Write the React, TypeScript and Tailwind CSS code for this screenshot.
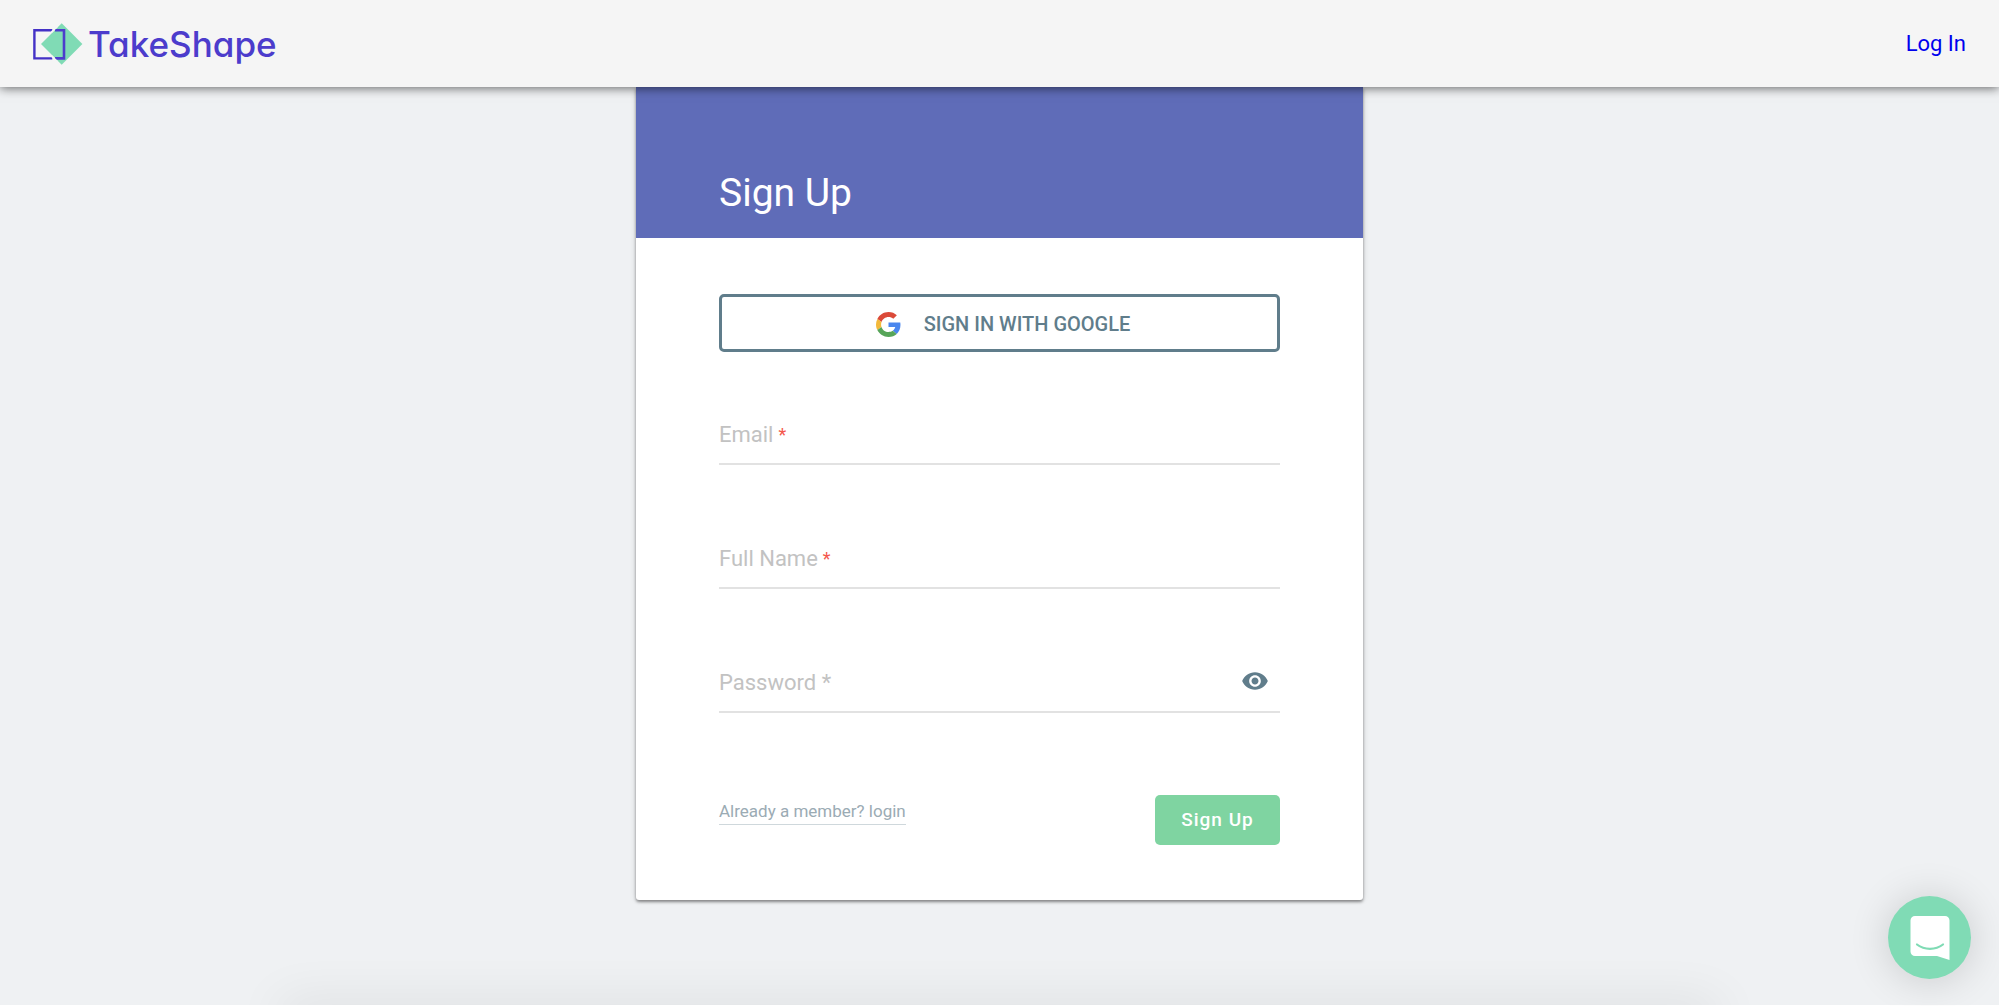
import { useState } from 'react';
import type { ReactNode } from 'react';

function Logo() {
  return (
    <a href="/" className="flex items-center gap-[5px] text-[#4c3ccc]">
      <svg viewBox="0 0 50 42" className="h-[42px] w-[50px]" aria-hidden="true">
        <path d="M19.300 7.200H1.400v28.200h17.900" fill="none" stroke="#4431c6" strokeWidth="2.400" />
        <path d="M28.700 0.300 49.400 21 28.700 41.700 8 21Z" fill="#80dbb5" />
        <path d="M22 7.200H31v28.200h-9" fill="none" stroke="#4c3ccc" strokeWidth="2.600" />
        <path d="M24.500 3.200 18.500 9.200M24.500 38.800 18.500 32.800" fill="none" stroke="#f5f5f5" strokeWidth="1.800" />
      </svg>
      <span className="font-['Inter',sans-serif] text-[35px] leading-[44px] font-medium [font-feature-settings:'cv11']">
        TakeShape
      </span>
    </a>
  );
}

function GoogleIcon() {
  return (
    <svg viewBox="0 0 48 48" className="size-[25px]" aria-hidden="true">
      <path fill="#DB4A39" d="M24 9.500c3.540 0 6.710 1.220 9.210 3.600l6.850-6.850C35.900 2.380 30.470 0 24 0 14.620 0 6.510 5.380 2.560 13.220l7.980 6.190C12.430 13.720 17.740 9.500 24 9.500z" />
      <path fill="#4A86EE" d="M46.980 24.550c0-1.570-.15-3.090-.38-4.550H24v9.020h12.940c-.58 2.960-2.260 5.480-4.780 7.180l7.730 6c4.510-4.180 7.090-10.360 7.090-17.650z" />
      <path fill="#F3B93B" d="M10.530 28.590c-.48-1.450-.76-2.990-.76-4.590s.27-3.140.76-4.590l-7.980-6.190C.92 16.460 0 20.120 0 24c0 3.880.92 7.540 2.560 10.780l7.970-6.190z" />
      <path fill="#57A559" d="M24 48c6.480 0 11.930-2.130 15.890-5.810l-7.730-6c-2.150 1.450-4.920 2.300-8.160 2.300-6.260 0-11.570-4.220-13.470-9.910l-7.980 6.190C6.510 42.620 14.620 48 24 48z" />
    </svg>
  );
}

function Field({ id, type, label, children }: { id: string; type: string; label: ReactNode; children?: ReactNode }) {
  const [value, setValue] = useState('');

  return (
    <div className="relative h-[62px] border-b-2 border-[#e2e2e2]">
      <input
        id={id}
        type={type}
        required
        value={value}
        onChange={(e) => setValue(e.target.value)}
        className="h-full w-full bg-transparent text-[22px] text-gray-700 outline-none"
      />
      {/* Label doubles as the placeholder */}
      {!value && (
        <label htmlFor={id} className="pointer-events-none absolute inset-0 flex items-center gap-[5px] pt-1 text-[22px] leading-8 text-[#c2c2c2]">
          {label}
        </label>
      )}
      {children}
    </div>
  );
}

export default function App() {
  const [showPassword, setShowPassword] = useState(false);

  return (
    <div className="relative flex min-h-screen flex-col overflow-hidden border-b border-white bg-[#eff1f3] font-['Roboto',sans-serif]">
      <header className="relative z-10 flex h-[87px] items-center justify-between bg-[#f5f5f5] px-[33px] shadow-[0_1px_10px_rgba(0,0,0,0.6)]">
        <Logo />
        <a href="/login" className="text-[22px] leading-8 text-[#0000ee]">Log In</a>
      </header>

      <main className="mx-auto w-full max-w-[727px]">
        <div className="overflow-hidden rounded-b-[3px] bg-white shadow-[0_2px_3px_rgba(0,0,0,0.4),0_0_6px_rgba(0,0,0,0.15)]">
          <div className="flex h-[151px] items-end bg-[#5f6cb8] px-[83px] pb-[21px]">
            <h1 className="text-[39px] leading-12 text-white">Sign Up</h1>
          </div>

          <form className="px-[83px] pt-14 pb-[55px]" onSubmit={(e) => e.preventDefault()}>
            <button
              type="button"
              className="flex h-[58px] w-full items-center justify-center gap-[23px] rounded-[5px] border-3 border-[#607d8b] pt-[2px] pl-[7px] text-[20px] font-medium text-[#607d8b]"
            >
              <GoogleIcon />
              SIGN IN WITH GOOGLE
            </button>

            <div className="mt-[51px] flex flex-col gap-[62px]">
              <Field id="email" type="email" label={<>Email<span className="text-[18px] text-[#f4574c]">*</span></>} />
              <Field id="name" type="text" label={<>Full Name<span className="text-[18px] text-[#f4574c]">*</span></>} />
              <Field id="password" type={showPassword ? 'text' : 'password'} label="Password *">
                <button
                  type="button"
                  aria-label="Show password"
                  onClick={() => setShowPassword(!showPassword)}
                  className="absolute top-4 right-[11px] text-[#607d8b]"
                >
                  <svg viewBox="0 0 24 24" className="size-7" fill="currentColor" aria-hidden="true">
                    <path d="M12 4.500C7 4.500 2.730 7.610 1 12c1.730 4.390 6 7.500 11 7.500s9.270-3.110 11-7.500c-1.730-4.390-6-7.500-11-7.500zM12 17c-2.760 0-5-2.240-5-5s2.240-5 5-5 5 2.240 5 5-2.240 5-5 5zm0-8c-1.660 0-3 1.340-3 3s1.340 3 3 3 3-1.340 3-3-1.340-3-3-3z" />
                  </svg>
                </button>
              </Field>
            </div>

            <div className="mt-[82px] flex items-start justify-between">
              <a href="/login" className="mt-1 border-b border-[#cfd8dc] pb-px text-[17px] leading-6 text-[#9babb4]">
                Already a member? login
              </a>
              <button type="submit" className="h-[50px] w-[125px] rounded-[5px] bg-[#7fd4a1] text-[19px] font-medium tracking-[1px] text-white">
                Sign Up
              </button>
            </div>
          </form>
        </div>
      </main>

      {/* Soft shadow along the bottom edge */}
      <div className="pointer-events-none absolute -bottom-5 left-[14%] right-[14%] h-5 shadow-[0_0_50px_rgba(0,0,0,0.12)]" />

      <button
        type="button"
        aria-label="Open chat"
        className="fixed right-7 bottom-[27px] flex size-[83px] items-center justify-center rounded-full bg-[#80dbb5] shadow-[0_2px_40px_rgba(0,0,0,0.16)]"
      >
        <svg viewBox="0 0 40 44" className="h-11 w-10" aria-hidden="true">
          <path d="M5 0h30a4.500 4.500 0 0 1 4.500 4.500V44L27 40H5a4.500 4.500 0 0 1-4.500-4.500v-31A4.500 4.500 0 0 1 5 0z" fill="#fff" />
          <path d="M7 28.500c7.500 5.800 18.500 5.800 26 0" fill="none" stroke="#80dbb5" strokeWidth="2.200" strokeLinecap="round" />
        </svg>
      </button>
    </div>
  );
}
